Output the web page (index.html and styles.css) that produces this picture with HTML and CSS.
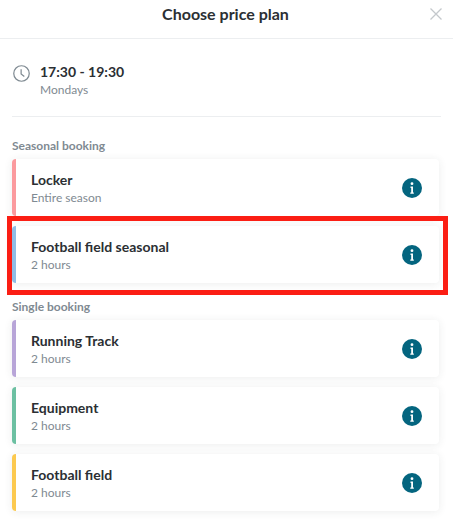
FILE: index.html
```html
<!DOCTYPE html>
<html lang="en">
<head>
<meta charset="utf-8">
<title>Choose price plan</title>
<link rel="stylesheet" href="styles.css">
</head>
<body>
<div class="page">
  <header class="header">
    <h1 class="title">Choose price plan</h1>
    <svg class="close" viewBox="0 0 12 12" aria-hidden="true"><path d="M.5.5l11 11M11.5.5l-11 11"/></svg>
  </header>
  <section class="when">
    <svg class="clock" viewBox="0 0 18 18" aria-hidden="true"><circle cx="9" cy="9" r="8.2"/><path d="M8.6 4.4v5l3.4 2.7"/></svg>
    <div class="when-text">
      <div class="time">17:30 - 19:30</div>
      <div class="sub">Mondays</div>
    </div>
  </section>
  <main class="plans">
    <h2 class="group">Seasonal booking</h2>
    <div class="list">
      <article class="card red">
        <div><div class="name">Locker</div><div class="sub">Entire season</div></div>
        <svg class="info" viewBox="0 0 20 20" aria-hidden="true"><circle class="disc" cx="10" cy="10" r="10"/><circle class="mark" cx="10" cy="5.7" r="1.4"/><path class="mark" d="M8.5 8.6h2.5v5.9h.8v1.3H8.3v-1.3h.9v-4.6h-.7z"/></svg>
      </article>
      <article class="card blue">
        <div><div class="name">Football field seasonal</div><div class="sub">2 hours</div></div>
        <svg class="info" viewBox="0 0 20 20" aria-hidden="true"><circle class="disc" cx="10" cy="10" r="10"/><circle class="mark" cx="10" cy="5.7" r="1.4"/><path class="mark" d="M8.5 8.6h2.5v5.9h.8v1.3H8.3v-1.3h.9v-4.6h-.7z"/></svg>
      </article>
    </div>
    <h2 class="group second">Single booking</h2>
    <div class="list">
      <article class="card purple">
        <div><div class="name">Running Track</div><div class="sub">2 hours</div></div>
        <svg class="info" viewBox="0 0 20 20" aria-hidden="true"><circle class="disc" cx="10" cy="10" r="10"/><circle class="mark" cx="10" cy="5.7" r="1.4"/><path class="mark" d="M8.5 8.6h2.5v5.9h.8v1.3H8.3v-1.3h.9v-4.6h-.7z"/></svg>
      </article>
      <article class="card green">
        <div><div class="name">Equipment</div><div class="sub">2 hours</div></div>
        <svg class="info" viewBox="0 0 20 20" aria-hidden="true"><circle class="disc" cx="10" cy="10" r="10"/><circle class="mark" cx="10" cy="5.7" r="1.4"/><path class="mark" d="M8.5 8.6h2.5v5.9h.8v1.3H8.3v-1.3h.9v-4.6h-.7z"/></svg>
      </article>
      <article class="card yellow">
        <div><div class="name">Football field</div><div class="sub">2 hours</div></div>
        <svg class="info" viewBox="0 0 20 20" aria-hidden="true"><circle class="disc" cx="10" cy="10" r="10"/><circle class="mark" cx="10" cy="5.7" r="1.4"/><path class="mark" d="M8.5 8.6h2.5v5.9h.8v1.3H8.3v-1.3h.9v-4.6h-.7z"/></svg>
      </article>
    </div>
  </main>
  <div class="highlight" aria-hidden="true"></div>
</div>
</body>
</html>
```
FILE: styles.css
```css
* { box-sizing: border-box; }
html, body { margin: 0; padding: 0; background: #fff; }
body { font-family: Lato, "Open Sans", sans-serif; color: #2b2f33; }
.page { position: relative; width: 453px; height: 522px; overflow: hidden; }
.header { height: 39px; display: flex; align-items: flex-start; justify-content: center; padding: 3px 2px 0 0; border-bottom: 1px solid #eceef0; position: relative; }
.title { margin: 0; font-size: 16px; line-height: 22px; font-weight: 700; color: #2b2f33; }
.close { position: absolute; right: 11px; top: 8px; width: 12px; height: 12px; fill: none; stroke: #c4c8cc; stroke-width: 1.3; }
.when { margin: 0 12px; height: 78px; display: flex; align-items: flex-start; gap: 10px; padding: 23px 0 0 1px; border-bottom: 1px solid #eceef0; }
.clock { width: 17px; height: 17px; margin-top: 3px; fill: none; stroke: #7f8a92; stroke-width: 1.3; flex: none; }
.time { font-size: 14px; line-height: 20px; font-weight: 700; }
.sub { font-size: 12px; line-height: 16px; color: #7f8a92; }
.plans { padding: 21px 14px 0 12px; }
.group { margin: 0 0 5px; font-size: 12px; line-height: 16px; font-weight: 700; color: #7f8a92; }
.second { margin-top: 16px; }
.list { display: flex; flex-direction: column; gap: 10px; }
.card { height: 57px; display: flex; align-items: center; justify-content: space-between; padding: 1px 17px 0 15px; background: #fff; border-left: 4px solid; border-radius: 4px; box-shadow: 0 1px 8px rgba(40, 50, 60, .09); }
.name { font-size: 14px; line-height: 20px; font-weight: 700; }
.red { border-left-color: #fb9a9e; }
.blue { border-left-color: #8fbde6; }
.purple { border-left-color: #b8a5d8; }
.green { border-left-color: #6cc0a2; }
.yellow { border-left-color: #fcc94f; }
.info { width: 20px; height: 20px; flex: none; margin-top: -1px; }
.disc { fill: #04657f; }
.mark { fill: #fff; }
.highlight { position: absolute; left: 7px; top: 216px; width: 441px; height: 79px; border: 5px solid #fb1e14; }
```
